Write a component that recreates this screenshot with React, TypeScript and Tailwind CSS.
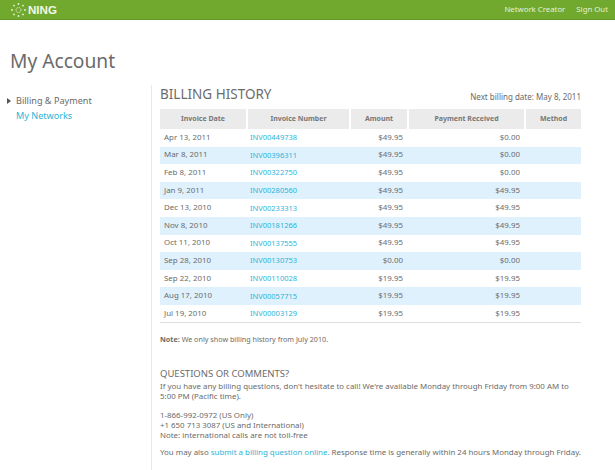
import React from 'react';

const INVOICES = [
    ['Apr 13, 2011', 'INV00449738', '$49.95', '$0.00'],
    ['Mar 8, 2011', 'INV00396311', '$49.95', '$0.00'],
    ['Feb 8, 2011', 'INV00322750', '$49.95', '$0.00'],
    ['Jan 9, 2011', 'INV00280560', '$49.95', '$49.95'],
    ['Dec 13, 2010', 'INV00233313', '$49.95', '$49.95'],
    ['Nov 8, 2010', 'INV00181266', '$49.95', '$49.95'],
    ['Oct 11, 2010', 'INV00137555', '$49.95', '$49.95'],
    ['Sep 28, 2010', 'INV00130753', '$0.00', '$0.00'],
    ['Sep 22, 2010', 'INV00110028', '$19.95', '$19.95'],
    ['Aug 17, 2010', 'INV00057715', '$19.95', '$19.95'],
    ['Jul 19, 2010', 'INV00003129', '$19.95', '$19.95'],
];

const HEADERS = ['Invoice Date', 'Invoice Number', 'Amount', 'Payment Received', 'Method'];

const NingLogo = () => (
    <svg width="15" height="14" viewBox="0 0 15 14" fill="#e8f3d8">
        <circle cx="7.5" cy="7" r="2.5" fill="none" stroke="#e8f3d8" strokeWidth="0.9" strokeDasharray="1.2 0.8" />
        <circle cx="7.5" cy="1" r="0.9" />
        <circle cx="7.5" cy="13" r="0.9" />
        <circle cx="1" cy="7" r="0.9" />
        <circle cx="14" cy="7" r="0.9" />
        <circle cx="3" cy="2.6" r="0.9" />
        <circle cx="12" cy="2.6" r="0.9" />
        <circle cx="3" cy="11.4" r="0.9" />
        <circle cx="12" cy="11.4" r="0.9" />
    </svg>
);

export default function App() {
    return (
        <div className="h-[470px] w-[615px] overflow-hidden bg-white font-['Noto_Sans',sans-serif] text-[#6b6b6b]">
            {/* Top bar */}
            <div className="flex h-[20px] items-center justify-between border-b border-[#64982a] bg-[#71a92f] pl-[11px] pr-[7px]">
                <div className="flex items-center gap-[2px]">
                    <NingLogo />
                    <span className="font-['Liberation_Sans',sans-serif] text-[11.6px] font-bold leading-none text-[#f2f8e8]">NING</span>
                </div>
                <div className="flex gap-[11px] text-[7.8px] text-[#e6f1d6]">
                    <span>Network Creator</span>
                    <span>Sign Out</span>
                </div>
            </div>

            <h1 className="mt-[28px] pl-[10px] text-[19.2px] leading-[26px]">My Account</h1>

            <div className="mt-[11px] flex h-[385px]">
                {/* Side nav */}
                <div className="w-[152px] shrink-0 border-r border-[#e8e8e8] pl-[7px] pt-[8px] text-[9.1px] leading-[15px]">
                    <div className="flex items-center gap-[5px]">
                        <span className="h-0 w-0 border-y-[3px] border-l-[4px] border-y-transparent border-l-[#555]" />
                        <span>Billing &amp; Payment</span>
                    </div>
                    <div className="pl-[9px] text-[#29b5d8]">My Networks</div>
                </div>

                {/* Billing history */}
                <div className="w-[429px] pl-[8px]">
                    <div className="flex items-end justify-between">
                        <h2 className="text-[13.5px] leading-[18px]">BILLING HISTORY</h2>
                        <span className="text-[8px] leading-[12px]">Next billing date: May 8, 2011</span>
                    </div>

                    <table className="mt-[6px] w-[421px] table-fixed border-collapse text-[7.9px]">
                        <colgroup>
                            <col className="w-[87px]" />
                            <col className="w-[103px]" />
                            <col className="w-[58px]" />
                            <col className="w-[117px]" />
                            <col className="w-[56px]" />
                        </colgroup>
                        <thead>
                            <tr>
                                {HEADERS.map((h, i) => (
                                    <th key={h} className={`h-[20px] bg-[#ebebeb] p-0 text-center text-[7px] font-bold text-[#777] ${i < 4 ? 'border-r-2 border-white' : ''}`}>
                                        {h}
                                    </th>
                                ))}
                            </tr>
                        </thead>
                        <tbody className="border-b border-[#ddd]">
                            {INVOICES.map((row, i) => (
                                <tr key={row[1]} className={`h-[17.6px] ${i % 2 === 1 ? 'bg-[#dff1fd]' : ''}`}>
                                    <td className="p-0 pl-[4px]">{row[0]}</td>
                                    <td className="p-0 pl-[3px] text-[7.5px] text-[#29b5d8]">{row[1]}</td>
                                    <td className="p-0 pr-[5px] text-right">{row[2]}</td>
                                    <td className="p-0 pr-[5px] text-right">{row[3]}</td>
                                    <td className="p-0" />
                                </tr>
                            ))}
                        </tbody>
                    </table>

                    <p className="mt-[11px] text-[7.2px] leading-[10px]">
                        <b>Note:</b> We only show billing history from July 2010.
                    </p>

                    {/* Questions */}
                    <div className="text-[7.9px] leading-[10px]">
                        <h3 className="mt-[23px] text-[9.5px] leading-[14px]">QUESTIONS OR COMMENTS?</h3>
                        <p className="w-[415px]">
                            If you have any billing questions, don't hesitate to call! We're available Monday through Friday from 9:00 AM to 5:00 PM (Pacific time).
                        </p>
                        <p className="mt-[9px]">
                            1-866-992-0972 (US Only)
                            <br />
                            +1 650 713 3087 (US and International)
                            <br />
                            Note: international calls are not toll-free
                        </p>
                        <p className="mt-[7px] whitespace-nowrap">
                            You may also <span className="text-[#29b5d8]">submit a billing question online.</span> Response time is generally within 24 hours Monday through Friday.
                        </p>
                    </div>
                </div>
            </div>
        </div>
    );
}
